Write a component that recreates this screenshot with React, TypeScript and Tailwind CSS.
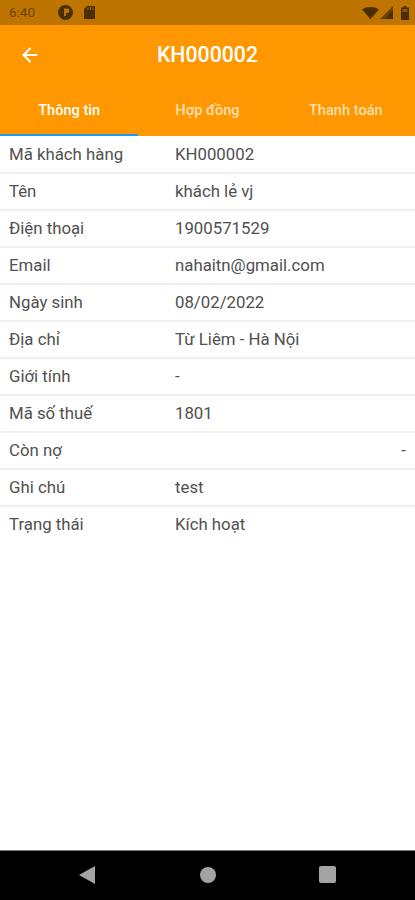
import React from "react";
import { ArrowLeft } from "lucide-react";

const rows = [
  { label: "Mã khách hàng", value: "KH000002" },
  { label: "Tên", value: "khách lẻ vj" },
  { label: "Điện thoại", value: "1900571529" },
  { label: "Email", value: "nahaitn@gmail.com" },
  { label: "Ngày sinh", value: "08/02/2022" },
  { label: "Địa chỉ", value: "Từ Liêm - Hà Nội" },
  { label: "Giới tính", value: "-" },
  { label: "Mã số thuế", value: "1801" },
  { label: "Còn nợ", value: "-", right: true },
  { label: "Ghi chú", value: "test" },
  { label: "Trạng thái", value: "Kích hoạt", last: true },
];

const StatusBar = () => (
  <div className="h-[25px] bg-[#bd7400] flex items-center justify-between pl-[9px] pr-[6px] text-[#6b4300]">
    <div className="flex items-center">
      <span className="text-[13.5px] leading-none w-[41px]">6:40</span>
      <svg width="15" height="15" viewBox="0 0 15 15" className="ml-[8px]">
        <circle cx="7.5" cy="7.5" r="7.5" fill="#4a2f00" />
        <path d="M6 3.5h3.2a2.3 2.3 0 0 1 0 4.6H8v3H6z" fill="#bd7400" />
      </svg>
      <svg width="11" height="13" viewBox="0 0 11 13" className="ml-[11px]">
        <path d="M3 0h8v13H0V3z" fill="#4a2f00" />
        <path d="M4 1v3M6.5 1v3M9 1v3" stroke="#bd7400" strokeWidth="0.8" />
      </svg>
    </div>
    <div className="flex items-center">
      <svg width="17" height="12" viewBox="0 0 17 12">
        <path d="M0 2.5C4.5-.8 12.5-.8 17 2.5L8.5 12z" fill="#4a2f00" />
      </svg>
      <svg width="13" height="13" viewBox="0 0 13 13" className="ml-[1px]">
        <path d="M13 0v13H0z" fill="#6b4300" />
        <path d="M13 4v9H5z" fill="#4a2f00" />
      </svg>
      <svg width="8" height="14" viewBox="0 0 8 14" className="ml-[8px]">
        <path d="M2.5 0h3v1.5H8V14H0V1.5h2.5z" fill="#4a2f00" />
        <path d="M1.5 3h5v3h-5z" fill="#8a5600" />
      </svg>
    </div>
  </div>
);

const Header = () => (
  <div className="bg-[#ff9800] text-white">
    <div className="h-[61px] flex items-center relative">
      <ArrowLeft className="absolute left-[19px] top-[19px] w-[22px] h-[22px]" strokeWidth={2.2} />
      <div className="flex-1 text-center text-[21.3px] font-medium leading-none pb-[1px]">KH000002</div>
    </div>
    <div className="h-[50px] grid grid-cols-3 text-[14.6px] font-medium">
      <div className="flex flex-col">
        <div className="flex-1 flex items-center justify-center pt-[2px]">Thông tin</div>
        <div className="h-[2px] bg-[#2196f3]" />
      </div>
      <div className="flex items-center justify-center text-white/70">Hợp đồng</div>
      <div className="flex items-center justify-center text-white/70">Thanh toán</div>
    </div>
  </div>
);

const InfoRow = ({ label, value, right, last }: { label: string; value: string; right?: boolean; last?: boolean }) => (
  <div className={`h-[37px] flex items-center pl-[9px] pr-[9px] text-[16.8px] text-[#505050] border-b-2 ${last ? "border-transparent" : "border-[#f0f0f0]"}`}>
    <div className="w-[166px] shrink-0">{label}</div>
    <div className={right ? "flex-1 text-right" : "flex-1"}>{value}</div>
  </div>
);

const NavBar = () => (
  <div className="h-[50px] bg-black border-t border-[#777] flex items-center pl-[79px] pb-[2px]">
    <svg width="16" height="18" viewBox="0 0 16 18">
      <path d="M16 0v18L0 9z" fill="#a3a3a3" />
    </svg>
    <div className="ml-[105px] w-[16px] h-[16px] rounded-full bg-[#a3a3a3]" />
    <div className="ml-[103px] w-[17px] h-[17px] rounded-[2px] bg-[#a3a3a3]" />
  </div>
);

const App = () => {
  return (
    <div className="w-[415px] h-[900px] flex flex-col bg-white font-['Roboto',sans-serif]">
      <StatusBar />
      <Header />
      <div className="flex-1 pt-px">
        {rows.map((r) => (
          <InfoRow key={r.label} label={r.label} value={r.value} right={r.right} last={r.last} />
        ))}
      </div>
      <NavBar />
    </div>
  );
};

export default App;
